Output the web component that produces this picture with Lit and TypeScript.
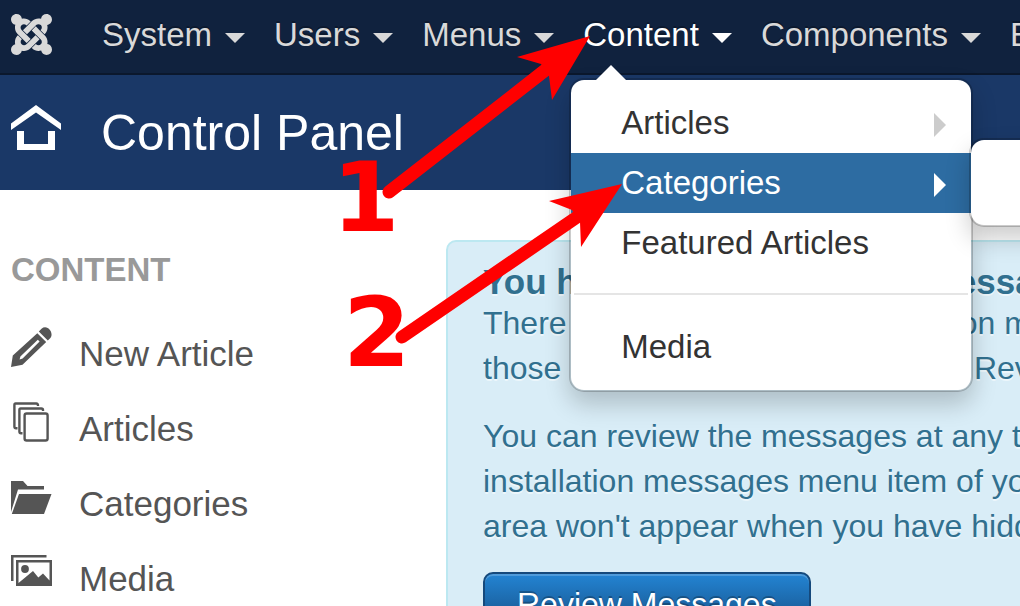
import { LitElement, html, svg, css } from "lit";
import { customElement } from "lit/decorators.js";

const joomla = svg`<path d="M16.719 14.759L14.22 17.26l-2.37 2.37-.462.466c-1.368 1.365-3.297 1.83-5.047 1.397-.327 1.424-1.604 2.49-3.13 2.49C1.438 23.983 0 22.547 0 20.772c0-1.518 1.055-2.789 2.469-3.123-.446-1.76.016-3.705 1.396-5.08l.179-.18 2.37 2.37-.184.181c-.769.779-.769 2.024 0 2.789.771.78 2.022.78 2.787 0l.465-.465 2.367-2.371 2.502-2.506 2.367 2.372zm.924 6.652c-1.822.563-3.885.12-5.328-1.318l-.18-.185 2.365-2.369.18.184c.771.768 2.018.768 2.787 0 .765-.765.769-2.01-.004-2.781l-.466-.465-2.365-2.37-2.502-2.503 2.37-2.369 2.499 2.505 2.367 2.37.464.464c1.365 1.36 1.846 3.278 1.411 5.021 1.56.224 2.759 1.56 2.759 3.18 0 1.784-1.439 3.21-3.209 3.21-1.545 0-2.851-1.096-3.135-2.565l-.013-.009zM6.975 9.461l2.508-2.505 2.37-2.369.462-.461C13.74 2.7 15.772 2.251 17.58 2.79 17.797 1.23 19.14.03 20.776.03c1.772 0 3.21 1.437 3.21 3.209 0 1.631-1.229 2.984-2.805 3.186.519 1.799.068 3.816-1.35 5.234l-.182.184-2.369-2.369.184-.184c.769-.77.769-2.016 0-2.783-.766-.766-2.011-.768-2.781.003l-.462.461-2.37 2.369-2.505 2.502-2.37-2.37-.001-.011zm-2.653 2.647l-.461-.462c-1.43-1.431-1.875-3.469-1.305-5.29C1.09 6.063 0 4.773 0 3.231c0-1.771 1.438-3.21 3.211-3.21 1.619 0 2.959 1.2 3.18 2.757 1.722-.404 3.602.066 4.943 1.407l.186.184L9.15 6.738l-.184-.184c-.769-.771-2.02-.769-2.785.002-.765.765-.765 2.006.006 2.777l.462.462 2.369 2.37 2.505 2.504-2.37 2.37-2.504-2.505-2.369-2.37.042-.056z"/>`;

const pencil = svg`<path fill-rule="evenodd" d="M26.3 6.2 35.2 15.1 11.5 37.8 0 40 1.8 28.5ZM26.800 12.800 9.400 29.400 8.6 32.4 11.6 31.4 28.600 14.600Z"/><path d="M27.8 4.6 30.5 1.7C33.4-.7 36.8.2 38.9 3 41.2 6 41 9.600 38.900 11.600L36.800 13.600Z"/>`;
const copies = svg`<g fill="none" stroke="currentColor" stroke-width="2.4"><path d="M27 4V3.500Q27 1.500 25.300 1.500H4.600Q3.400 1.500 3.400 3V24.500Q3.400 26.200 5 26.200H6.500"/><path d="M32 9V8Q32 6.500 30.300 6.500H9.600Q8.400 6.500 8.400 8V29.500Q8.400 31.200 10 31.200H11.500"/><rect x="13.600" y="11.500" width="23" height="27" rx="2"/></g>`;
const folder = svg`<path d="M0 4H12L16.500 9H33V12.500H7L0 35Z"/><path d="M8 17H40.500L33 37H0.800Z"/>`;
const images = svg`<path d="M0 3H35.500V5.500H2.500V29H0Z"/><path fill-rule="evenodd" d="M5 8H41V34H5ZM7.500 10.500V31L22 19 27.300 25.500 32 21.500 38.500 28.500V10.500Z"/><circle cx="14" cy="17" r="3.900"/>`;

@customElement("app-root")
export class AppRoot extends LitElement {
  static styles = css`
    :host {
      display: block;
      position: relative;
      height: 100vh;
      overflow: hidden;
      background: #fff;
      font-family: "Liberation Sans", Arial, sans-serif;
      font-size: 33px;
      line-height: 45px;
      color: #555;
    }
    * { box-sizing: border-box; }
    a { color: inherit; text-decoration: none; }
    ul, h1, h2, h4, p { margin: 0; padding: 0; list-style: none; }
    svg { display: block; flex: none; fill: currentColor; }

    .navbar {
      position: relative;
      z-index: 2;
      display: flex;
      align-items: center;
      height: 75px;
      padding: 0 0 4px 11px;
      background: #10223e;
      border-bottom: 2px solid #0b182d;
      color: #d9d9d9;
      text-shadow: 0 -2px 0 rgba(0, 0, 0, 0.25);
      white-space: nowrap;
    }
    .menu { display: flex; gap: 29px; margin-left: 50px; }
    .item { position: relative; flex: none; }
    .toggle { display: flex; align-items: center; gap: 13px; }
    .toggle::after {
      content: "";
      margin-top: 6px;
      border: 10px solid transparent;
      border-top-color: currentColor;
      border-bottom: 0;
    }
    .open { color: #fff; }

    .dropdown, .submenu {
      position: absolute;
      background: #fff;
      background-clip: padding-box;
      border: 2px solid rgba(0, 0, 0, 0.2);
      border-radius: 15px;
      box-shadow: 0 12px 25px rgba(0, 0, 0, 0.2);
      text-shadow: none;
      color: #333;
    }
    .dropdown { top: 66px; left: -14px; width: 404px; padding: 13px 0; }
    .dropdown::before {
      content: "";
      position: absolute;
      left: 25px;
      bottom: 100%;
      border: 15px solid transparent;
      border-bottom-color: #fff;
      border-top: 0;
    }
    .entry {
      display: flex;
      align-items: center;
      justify-content: space-between;
      height: 60px;
      padding: 0 25px 2px 50px;
    }
    .parent::after {
      content: "";
      margin-top: 6px;
      border: 12px solid transparent;
      border-left-color: #ccc;
      border-right: 0;
    }
    .active { background: #2d6ca2; color: #fff; }
    .active::after { border-left-color: #fff; }
    .divider { height: 2px; margin: 20px 3px 22px; background: #e5e5e5; }
    .holder { position: relative; }
    .submenu { left: 398px; top: -15px; width: 400px; height: 89px; }

    .header {
      display: flex;
      align-items: center;
      gap: 40px;
      height: 115px;
      padding-left: 11px;
      background: #1a3867;
      color: #fff;
    }
    .title { font-size: 50px; line-height: 60px; font-weight: 400; }

    .body { display: grid; grid-template-columns: 435px minmax(0, 1fr); padding: 50px 0 0 11px; }
    .group { font-size: 33px; line-height: 60px; color: #999; }
    .links { display: grid; gap: 15px; padding-top: 23px; }
    .link { display: flex; align-items: center; gap: 27px; height: 60px; font-size: 35px; }
    .link svg { margin-bottom: 12px; }

    .alert {
      width: max-content;
      padding: 21px 36px 36px 35px;
      background: #d9edf7;
      border: 2px solid #bce8f1;
      border-radius: 10px;
      color: #31708f;
      text-shadow: 0 2px 0 rgba(255, 255, 255, 0.5);
      white-space: nowrap;
    }
    .notice { font-size: 35px; line-height: 38px; }
    .text { margin-bottom: 23px; font-size: 32px; }
    .review {
      padding: 8px 32px;
      font: inherit;
      font-size: 32px;
      color: #fff;
      background: linear-gradient(#2384d3, #15497c);
      border: 2px solid #15497c;
      border-radius: 10px;
      box-shadow: inset 0 2px 0 rgba(255, 255, 255, 0.2);
      text-shadow: 0 -2px 0 rgba(0, 0, 0, 0.25);
    }

    .marks { position: absolute; z-index: 3; left: 0; top: 0; pointer-events: none; fill: #f00; }
    .digit { font: bold 97px "DejaVu Sans", sans-serif; }
    .shaft { stroke: #f00; stroke-width: 13px; stroke-linecap: round; }
  `;

  private icon(shape: unknown) {
    return html`<svg width="41" height="41" viewBox="0 0 41 41" aria-hidden="true">${shape}</svg>`;
  }

  private dropdown() {
    return html`<ul class="dropdown">
      <li><a class="entry parent" href="#">Articles</a></li>
      <li class="holder">
        <a class="entry parent active" href="#">Categories</a>
        <div class="submenu"></div>
      </li>
      <li><a class="entry" href="#">Featured Articles</a></li>
      <li class="divider" role="separator"></li>
      <li><a class="entry" href="#">Media</a></li>
    </ul>`;
  }

  render() {
    const menus = ["System", "Users", "Menus", "Content", "Components", "Extensions"];
    const links: [string, unknown][] = [
      ["New Article", pencil],
      ["Articles", copies],
      ["Categories", folder],
      ["Media", images],
    ];
    return html`
      <nav class="navbar">
        <a href="#" aria-label="Joomla"><svg width="41" height="41" viewBox="0 0 24 24">${joomla}</svg></a>
        <ul class="menu">
          ${menus.map((name) => html`<li class="item">
            <a class="toggle ${name === "Content" ? "open" : ""}" href="#">${name}</a>
            ${name === "Content" ? this.dropdown() : ""}
          </li>`)}
        </ul>
      </nav>
      <header class="header">
        <svg width="50" height="60" viewBox="0 0 50 60" aria-hidden="true">
          <path d="M0 27V20.500L25 2 50 20.500V27L25 9.500ZM6 28H13V41H37V28H44V47H6Z"/>
        </svg>
        <h1 class="title">Control Panel</h1>
      </header>
      <div class="body">
        <aside>
          <h2 class="group">CONTENT</h2>
          <ul class="links">
            ${links.map(([name, shape]) => html`<li><a class="link" href="#">${this.icon(shape)}${name}</a></li>`)}
          </ul>
        </aside>
        <main>
          <section class="alert">
            <h4 class="notice">You have post-installation messages</h4>
            <p class="text">There are important post-installation messages that require your attention. To view<br />those messages please select the Review Messages button below.</p>
            <p class="text">You can review the messages at any time by clicking on the Components, Post-<br />installation messages menu item of your Joomla! Administration section. This information<br />area won't appear when you have hidden all the messages.</p>
            <button class="review">Review Messages</button>
          </section>
        </main>
      </div>
      <svg class="marks" width="640" height="400" viewBox="0 0 640 400">
        <text class="digit" x="332" y="231">1</text>
        <text class="digit" x="343" y="366">2</text>
        <path class="shaft" d="M389 192 548 68M402 337 580 215"/>
        <path d="M590 36 517 57 541 64 549 76 552 100ZM622 184 549 201 572 210 580 222 581 247Z"/>
      </svg>
    `;
  }
}
